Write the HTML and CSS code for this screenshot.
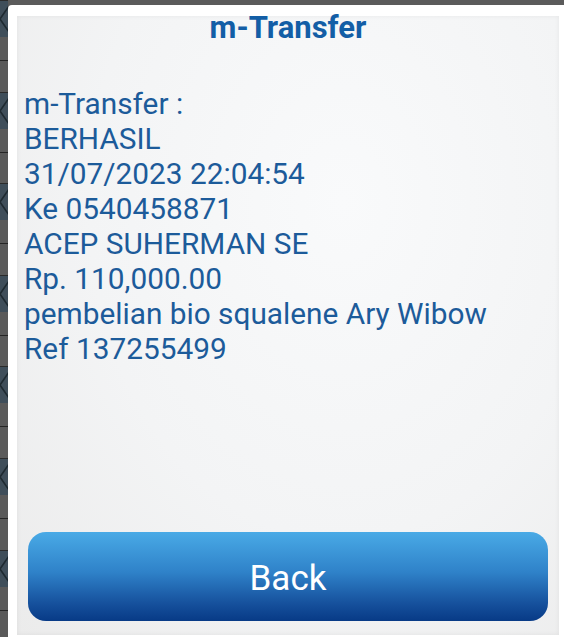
FILE: index.html
```html
<!DOCTYPE html>
<html lang="id">
<head>
<meta charset="utf-8">
<title>m-Transfer</title>
<link rel="stylesheet" href="styles.css">
</head>
<body>
<div class="screen">
  <div class="side">
    <div class="side-item"><div class="side-box"><svg width="8" height="37" viewBox="0 0 8 37"><polyline points="9,5 0,18 9,31" fill="none" stroke="#1e2a31" stroke-width="1.6"/></svg></div></div>
    <div class="side-item"><div class="side-box"><svg width="8" height="37" viewBox="0 0 8 37"><polyline points="9,5 0,18 9,31" fill="none" stroke="#1e2a31" stroke-width="1.6"/></svg></div></div>
    <div class="side-item"><div class="side-box"><svg width="8" height="37" viewBox="0 0 8 37"><polyline points="9,5 0,18 9,31" fill="none" stroke="#1e2a31" stroke-width="1.6"/></svg></div></div>
    <div class="side-item"><div class="side-box"><svg width="8" height="37" viewBox="0 0 8 37"><polyline points="9,5 0,18 9,31" fill="none" stroke="#1e2a31" stroke-width="1.6"/></svg></div></div>
    <div class="side-item"><div class="side-box"><svg width="8" height="37" viewBox="0 0 8 37"><polyline points="9,5 0,18 9,31" fill="none" stroke="#1e2a31" stroke-width="1.6"/></svg></div></div>
    <div class="side-item"><div class="side-box"><svg width="8" height="37" viewBox="0 0 8 37"><polyline points="9,5 0,18 9,31" fill="none" stroke="#1e2a31" stroke-width="1.6"/></svg></div></div>
    <div class="side-item"><div class="side-box"><svg width="8" height="37" viewBox="0 0 8 37"><polyline points="9,5 0,18 9,31" fill="none" stroke="#1e2a31" stroke-width="1.6"/></svg></div></div>
  </div>
  <div class="topband"><span class="topband-text">Transfer BCA Virtual Account</span></div>
  <div class="dialog">
    <div class="panel">
      <h1 class="title">m-Transfer</h1>
      <div class="message">
        <div>m-Transfer :</div>
        <div>BERHASIL</div>
        <div>31/07/2023 22:04:54</div>
        <div>Ke 0540458871</div>
        <div>ACEP SUHERMAN SE</div>
        <div>Rp. 110,000.00</div>
        <div>pembelian bio squalene Ary Wibow</div>
        <div>Ref 137255499</div>
      </div>
      <button class="back">Back</button>
    </div>
  </div>
</div>
</body>
</html>
```
FILE: styles.css
```css
html, body {
  margin: 0;
  padding: 0;
}
body {
  background: #5b5b5b;
  font-family: Roboto, "Noto Sans", sans-serif;
  width: 564px;
  height: 637px;
  overflow: hidden;
}
.screen {
  display: grid;
  grid-template-columns: 8px 1fr;
  grid-template-rows: 5px 1fr;
  width: 564px;
  height: 637px;
}
.side {
  grid-column: 1;
  grid-row: 1 / 3;
  background: #5a5a5a;
  overflow: hidden;
  display: flex;
  flex-direction: column;
}
.side-item {
  flex: 0 0 91.6px;
  box-sizing: border-box;
}
.side-item::after {
  content: "";
  display: block;
  margin-top: 23px;
  height: 1px;
  background: #262626;
}
.side-box {
  height: 37px;
  background: #3f4e5a;
  border-top: 1px solid #2b2b2b;
  box-sizing: border-box;
  overflow: hidden;
}
.side-box svg {
  display: block;
}
.topband {
  grid-column: 2;
  grid-row: 1;
  overflow: hidden;
  background: #5b5b5b;
}
.topband-text {
  display: block;
  margin-top: -25px;
  padding-left: 92px;
  font-size: 30px;
  line-height: 30px;
  color: #8e8e8e;
  white-space: nowrap;
}
.dialog {
  grid-column: 2;
  grid-row: 2;
  background: #ffffff;
  border-top-left-radius: 4px;
  padding: 11px 5px 2px 9px;
  display: flex;
}
.panel {
  flex: 1;
  display: flex;
  flex-direction: column;
  background: radial-gradient(ellipse at 60% 30%, #f9fafb 0%, #f3f4f5 55%, #ebebeb 100%);
  box-shadow: inset 0 0 5px rgba(0, 0, 0, 0.06);
  padding: 0 11px 14px 7px;
}
.title {
  margin: 0;
  text-align: center;
  font-size: 31px;
  line-height: 24px;
  font-weight: 700;
  color: #135ea6;
  padding-left: 4px;
}
.message {
  margin-top: 46px;
  font-size: 29.8px;
  line-height: 35px;
  color: #1c5b9a;
  white-space: nowrap;
}
.back {
  margin-top: auto;
  margin-left: 4px;
  height: 89px;
  border: none;
  border-radius: 18px;
  background: linear-gradient(to bottom, #49aae6 0%, #2f82c9 45%, #16519d 80%, #073a86 100%);
  color: #ffffff;
  font-family: Roboto, "Noto Sans", sans-serif;
  font-size: 35px;
  padding: 3px 0 0 0;
}
```
